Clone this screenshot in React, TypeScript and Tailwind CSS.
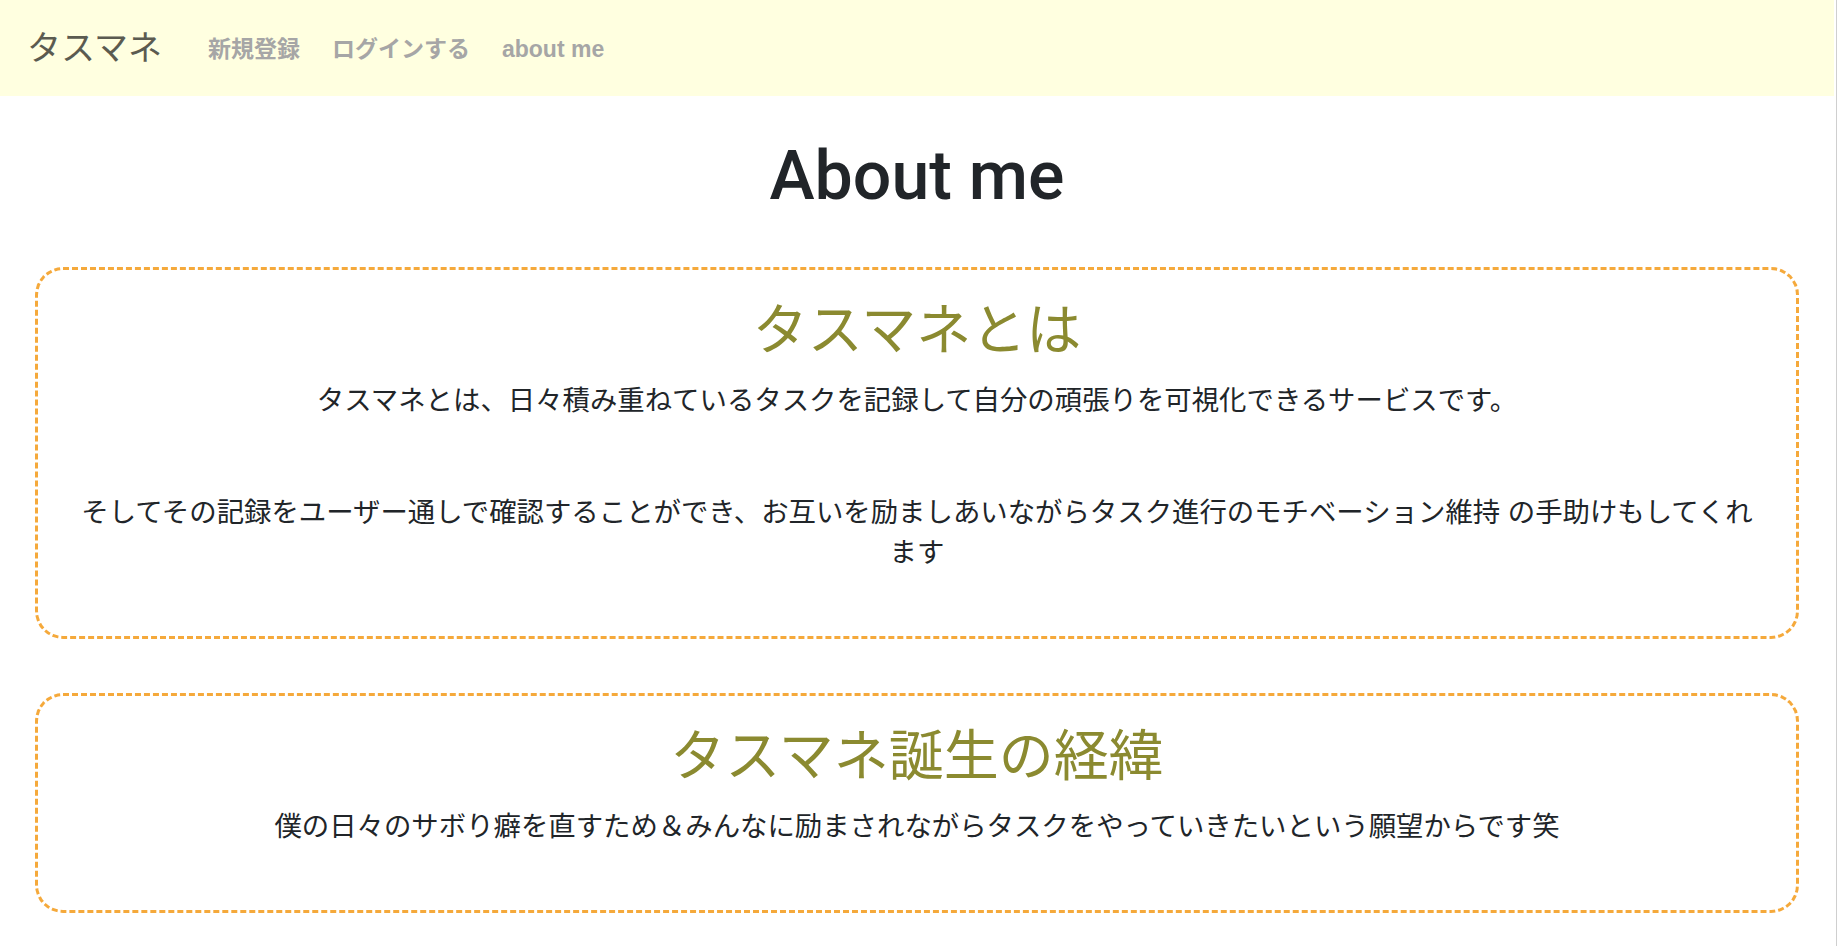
import React from 'react';

const sections = [
  {
    title: 'タスマネとは',
    paragraphs: [
      'タスマネとは、日々積み重ねているタスクを記録して自分の頑張りを可視化できるサービスです。',
      'そしてその記録をユーザー通しで確認することができ、お互いを励ましあいながらタスク進行のモチベーション維持 の手助けもしてくれます',
    ],
  },
  {
    title: 'タスマネ誕生の経緯',
    paragraphs: ['僕の日々のサボり癖を直すため＆みんなに励まされながらタスクをやっていきたいという願望からです笑'],
  },
];

const navLinks = ['新規登録', 'ログインする', 'about me'];

export default function App() {
  return (
    <div className="flex min-h-screen bg-white font-['Liberation_Sans','Noto_Sans_CJK_JP',sans-serif] text-[#212529]">
      <div className="flex-1 min-w-0">
        {/* ナビバー */}
        <nav className="h-[96px] bg-[#ffffe0] px-[27px] flex items-center">
          <a className="text-[34px] leading-none text-[#5b5b50] mr-[30px]">タスマネ</a>
          <ul className="flex items-center mt-[2px]">
            {navLinks.map((link) => (
              <li key={link}>
                <a className="block px-[16px] text-[23px] leading-none font-bold text-[#a6a6a6]">{link}</a>
              </li>
            ))}
          </ul>
        </nav>

        <h1 className="mt-[40px] mb-[49px] text-center text-[68px] leading-[1.2] font-medium font-['Roboto',sans-serif] text-[#212529]">
          About me
        </h1>

        <div className="mx-[35px] flex flex-col gap-[54px] pb-[33px]">
          {sections.map((section) => (
            <section
              key={section.title}
              className="border-[3px] border-dashed border-[#f5a93b] rounded-[28px] px-[30px] pt-[27px] pb-[63px] text-center"
            >
              <h2 className="text-[55px] leading-[1.2] text-[#8b8a30] mb-[18px]">{section.title}</h2>
              <div className="flex flex-col gap-[72px]">
                {section.paragraphs.map((p) => (
                  <p key={p} className="text-[27.4px] leading-[40px]">
                    {p}
                  </p>
                ))}
              </div>
            </section>
          ))}
        </div>
      </div>
      {/* スクロールバーの縁 */}
      <div className="w-[4px] shrink-0 pl-[2px] pr-px">
        <div className="h-full bg-[#cfcfcf]" />
      </div>
    </div>
  );
}
